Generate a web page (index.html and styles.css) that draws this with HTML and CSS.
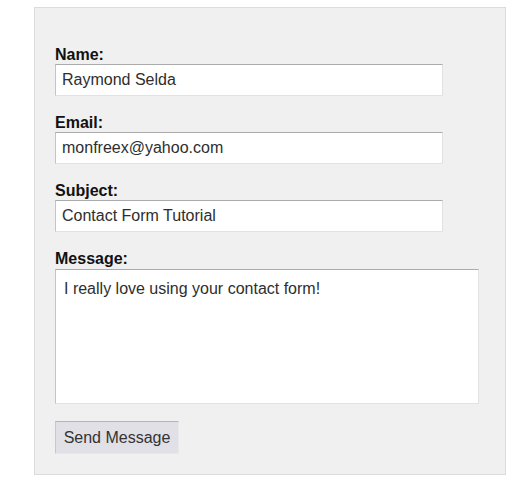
FILE: index.html
```html
<!DOCTYPE html>
<html>
<head>
<meta charset="utf-8">
<link rel="stylesheet" href="styles.css">
</head>
<body>
<form class="panel">
  <label class="label" for="name">Name:</label>
  <input class="field" id="name" type="text" value="Raymond Selda">
  <label class="label" for="email">Email:</label>
  <input class="field" id="email" type="text" value="monfreex@yahoo.com">
  <label class="label" for="subject">Subject:</label>
  <input class="field" id="subject" type="text" value="Contact Form Tutorial">
  <label class="label" for="message">Message:</label>
  <textarea class="area" id="message">I really love using your contact form!</textarea>
  <button class="send" type="button">Send Message</button>
</form>
</body>
</html>
```
FILE: styles.css
```css
html, body {
  margin: 0;
  padding: 0;
  background: #ffffff;
}
body {
  font-family: "Liberation Sans", Arial, sans-serif;
}
.panel {
  margin: 7px 0 0 34px;
  width: 472px;
  box-sizing: border-box;
  border: 1px solid #dcdcdc;
  background: #f0f0f0;
  padding: 38px 20px 20px 20px;
  display: flex;
  flex-direction: column;
  align-items: flex-start;
}
.label {
  display: block;
  font-size: 16px;
  font-weight: bold;
  line-height: 17px;
  height: 17px;
  padding-bottom: 1px;
  color: #111;
}
.field {
  display: block;
  box-sizing: border-box;
  width: 388px;
  height: 32px;
  margin: 0 0 18px 0;
  padding: 0 6px;
  font-family: "Liberation Sans", Arial, sans-serif;
  font-size: 16px;
  color: #2e2e2e;
  background: #fff;
  border-style: solid;
  border-width: 1px;
  border-color: #ababab #e2e2e2 #e2e2e2 #c4c4c4;
  outline: none;
}
.area {
  display: block;
  box-sizing: border-box;
  width: 424px;
  height: 135px;
  margin: 1px 0 17px 0;
  padding: 10px 8px;
  font-family: "Liberation Sans", Arial, sans-serif;
  font-size: 16px;
  line-height: 18px;
  color: #2e2e2e;
  background: #fff;
  border-style: solid;
  border-width: 1px;
  border-color: #ababab #e2e2e2 #e2e2e2 #c4c4c4;
  resize: none;
  outline: none;
}
.send {
  display: block;
  box-sizing: border-box;
  width: 124px;
  height: 33px;
  padding: 0;
  font-family: "Liberation Sans", Arial, sans-serif;
  font-size: 16px;
  color: #333;
  background: #e0e0e6;
  border-style: solid;
  border-width: 1px;
  border-color: #b4b4b4 #e8e8e8 #e8e8e8 #c8c8c8;
}
```
